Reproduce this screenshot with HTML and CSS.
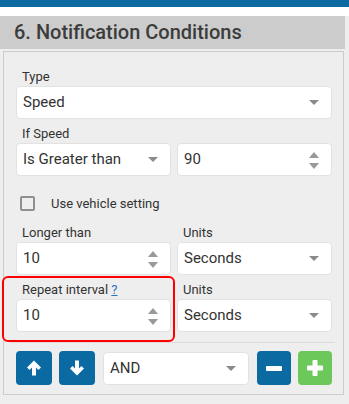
FILE: index.html
```html
<!DOCTYPE html>
<html lang="en">
<head>
    <meta charset="UTF-8">
    <meta name="viewport" content="width=device-width, initial-scale=1.0">
    <title>Notification Conditions</title>
    <link rel="stylesheet" href="styles.css">
</head>
<body>
    <div class="top-bar"></div>
    <div class="gap-strip"></div>
    <h2 class="section-title">6. Notification Conditions</h2>

    <div class="panel">
        <div class="field first">
            <label>Type</label>
            <div class="control select">Speed<span class="caret"></span></div>
        </div>

        <div class="row field">
            <div class="col">
                <label>If Speed</label>
                <div class="control select">Is Greater than<span class="caret"></span></div>
            </div>
            <div class="col">
                <label>&nbsp;</label>
                <div class="control number">90<span class="spin"><i class="up"></i><i class="down"></i></span></div>
            </div>
        </div>

        <div class="check-row">
            <span class="checkbox"></span>
            <span>Use vehicle setting</span>
        </div>

        <div class="row field mid">
            <div class="col">
                <label>Longer than</label>
                <div class="control number">10<span class="spin"><i class="up"></i><i class="down"></i></span></div>
            </div>
            <div class="col">
                <label>Units</label>
                <div class="control select">Seconds<span class="caret"></span></div>
            </div>
        </div>

        <div class="row field">
            <div class="col highlight">
                <label>Repeat interval <a href="#">?</a></label>
                <div class="control number">10<span class="spin"><i class="up"></i><i class="down"></i></span></div>
            </div>
            <div class="col">
                <label>Units</label>
                <div class="control select">Seconds<span class="caret"></span></div>
            </div>
        </div>

        <div class="divider"></div>

        <div class="actions">
            <button class="btn blue wide">
                <svg width="16" height="16" viewBox="0 0 16 16"><path d="M8 0.5 L15 7.5 L12.4 10 L10 7.6 L10 15.5 L6 15.5 L6 7.6 L3.6 10 L1 7.5 Z" fill="#fff"/></svg>
            </button>
            <button class="btn blue wide">
                <svg width="16" height="16" viewBox="0 0 16 16"><path d="M8 15.5 L15 8.5 L12.4 6 L10 8.4 L10 0.5 L6 0.5 L6 8.4 L3.6 6 L1 8.5 Z" fill="#fff"/></svg>
            </button>
            <div class="control select and">AND<span class="caret"></span></div>
            <button class="btn blue">
                <svg width="16" height="5" viewBox="0 0 16 5"><rect width="16" height="5" rx="1" fill="#fff"/></svg>
            </button>
            <button class="btn green">
                <svg width="16" height="16" viewBox="0 0 16 16"><rect x="5.5" y="0" width="5" height="16" rx="1" fill="#fff"/><rect x="0" y="5.5" width="16" height="5" rx="1" fill="#fff"/></svg>
            </button>
        </div>
    </div>
</body>
</html>
```

FILE: styles.css
```css
body {
    margin: 0;
    background: #eeeeee;
    font-family: Roboto, "Liberation Sans", Arial, sans-serif;
    color: #333;
}
.top-bar {
    height: 7px;
    background: #0b6aa2;
}
.gap-strip {
    height: 9px;
    background: #fff;
}
.section-title {
    margin: 0;
    width: 345px;
    height: 33px;
    box-sizing: border-box;
    padding-left: 14px;
    background: #cccccc;
    color: #3c3c3c;
    font-size: 20px;
    font-weight: 500;
    line-height: 33px;
}
.panel {
    margin: 2px 0 0 3px;
    width: 341px;
    box-sizing: border-box;
    border: 1px solid #cccccc;
    padding: 17px 11px 9px 12px;
}
.field {
    margin-top: 7px;
}
.field.first {
    margin-top: 0;
}
.field.mid {
    margin-top: 14px;
}
label {
    display: block;
    padding-left: 6px;
    margin-bottom: 1px;
    font-size: 13px;
    line-height: 16px;
    color: #333;
}
label a {
    color: #2a73c0;
}
.row {
    display: flex;
    gap: 6px;
}
.col {
    flex: 1;
}
.control {
    position: relative;
    height: 33px;
    box-sizing: border-box;
    padding-left: 6px;
    background: #fff;
    border: 1px solid #e2e2e2;
    border-radius: 4px;
    font-size: 15px;
    line-height: 31px;
    color: #333;
}
.caret {
    position: absolute;
    right: 12px;
    top: 13px;
    width: 0;
    height: 0;
    border-left: 5px solid transparent;
    border-right: 5px solid transparent;
    border-top: 5px solid #8a8a8a;
}
.spin {
    position: absolute;
    right: 12px;
    top: 8px;
    display: flex;
    flex-direction: column;
    gap: 5px;
}
.spin i {
    display: block;
    width: 0;
    height: 0;
    border-left: 5px solid transparent;
    border-right: 5px solid transparent;
}
.spin .up {
    border-bottom: 6px solid #999;
}
.spin .down {
    border-top: 6px solid #999;
}
.check-row {
    display: flex;
    align-items: center;
    margin: 19px 0 0 4px;
    height: 16px;
    font-size: 13px;
}
.checkbox {
    width: 15px;
    height: 15px;
    box-sizing: border-box;
    border: 2px solid #8f8f8f;
    border-radius: 2px;
    margin-right: 16px;
}
.highlight {
    position: relative;
}
.highlight::after {
    content: "";
    position: absolute;
    top: -6px;
    bottom: -10px;
    left: -14px;
    right: -4px;
    border: 2px solid #f00;
    border-radius: 6px;
}
.divider {
    margin: 10px -3px 0 -6px;
    border-top: 1px solid #dcdcdc;
}
.actions {
    display: flex;
    align-items: center;
    gap: 7px;
    margin-top: 8px;
}
.btn {
    width: 34px;
    height: 34px;
    border: none;
    border-radius: 4px;
    padding: 0;
    display: flex;
    align-items: center;
    justify-content: center;
    cursor: pointer;
}
.btn.wide {
    width: 36px;
}
.blue {
    background: #0b6aa2;
}
.green {
    background: #6cc85a;
}
.and {
    flex: 1;
    margin: 0 1px;
}
```
